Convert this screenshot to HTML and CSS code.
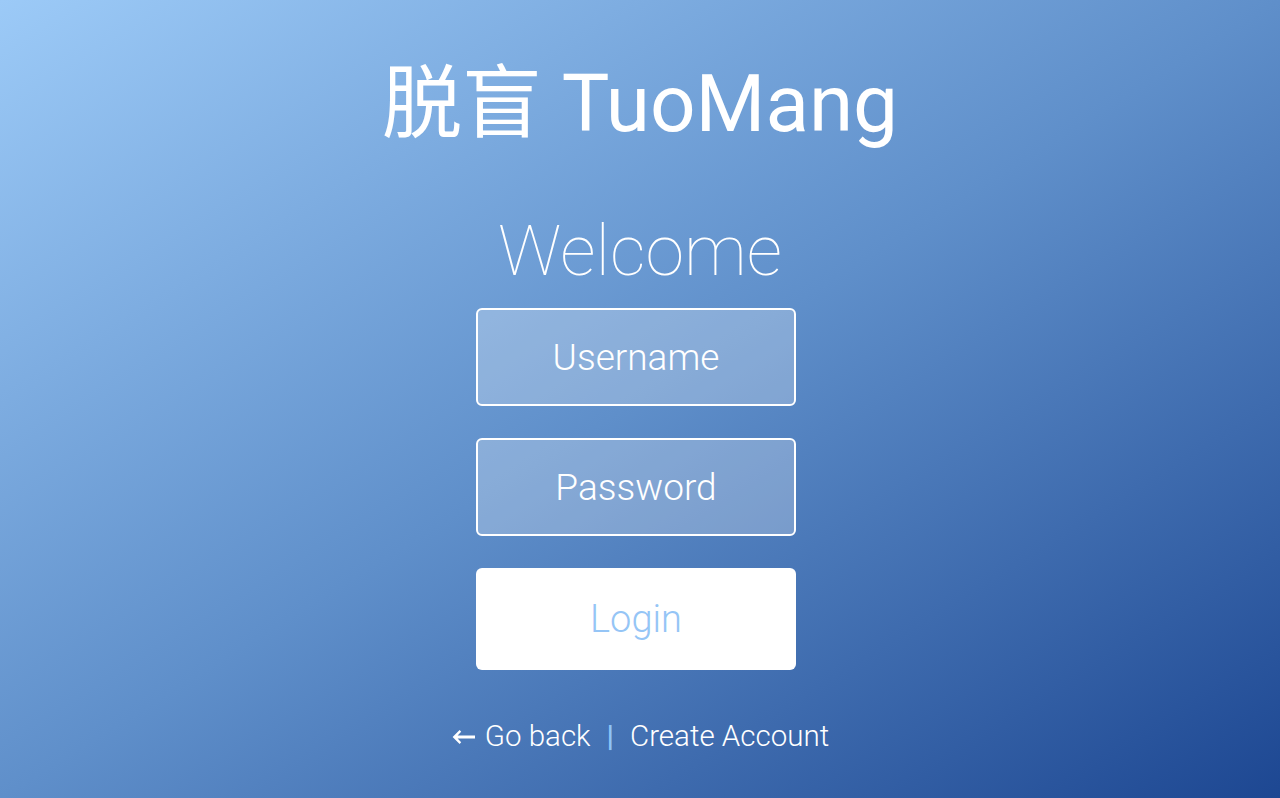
FILE: index.html
```html
<!DOCTYPE html>
<html lang="en">
<head>
<meta charset="utf-8">
<title>TuoMang</title>
<link rel="stylesheet" href="styles.css">
</head>
<body>
<main class="page">
  <h1 class="brand">脱盲 TuoMang</h1>
  <h2 class="welcome">Welcome</h2>
  <form class="form">
    <input class="field" type="text" placeholder="Username">
    <input class="field" type="password" placeholder="Password">
    <button class="login" type="button">Login</button>
  </form>
  <nav class="links">
    <a class="link" href="#"><svg class="arrow" width="24" height="14" viewBox="0 0 24 14" aria-hidden="true"><path d="M24 5.4H6.6L10.2 1.8 8.6 0 1.6 7l7 7 1.6-1.8-3.6-3.6H24z" fill="#fff"/></svg>Go back</a>
    <span class="sep">|</span>
    <a class="link" href="#">Create Account</a>
  </nav>
</main>
</body>
</html>
```
FILE: styles.css
```css
html, body {
  margin: 0;
  padding: 0;
  height: 100%;
}
body {
  background: linear-gradient(to bottom right, #9ccaf7 0%, #5f8fca 50%, #1d4792 100%);
  font-family: Roboto, "Noto Sans CJK SC", sans-serif;
  color: #fff;
  overflow: hidden;
}
.page {
  height: 798px;
  display: flex;
  flex-direction: column;
  align-items: center;
}
.brand {
  margin: 0;
  padding-top: 57px;
  font-size: 80px;
  font-weight: 400;
  line-height: 94px;
  font-family: Roboto, "Noto Sans CJK SC", sans-serif;
}
.welcome {
  margin: 0;
  margin-top: 58px;
  font-size: 70px;
  font-weight: 100;
  line-height: 84px;
}
.form {
  display: flex;
  flex-direction: column;
  gap: 32px;
  margin-top: 15px;
  margin-right: 8px;
}
.field {
  box-sizing: border-box;
  width: 320px;
  height: 98px;
  border: 2px solid #fff;
  border-radius: 6px;
  background: rgba(255, 255, 255, 0.25);
  color: #fff;
  text-align: center;
  font-family: Roboto, sans-serif;
  font-size: 37px;
  font-weight: 300;
  outline: none;
  padding: 0;
}
.field::placeholder {
  color: #fff;
  opacity: 1;
}
.login {
  box-sizing: border-box;
  width: 320px;
  height: 102px;
  border: none;
  border-radius: 6px;
  background: #fff;
  color: #95c5f6;
  font-family: Roboto, sans-serif;
  font-size: 38px;
  font-weight: 300;
  cursor: pointer;
}
.links {
  margin-top: 49px;
  display: flex;
  align-items: baseline;
  gap: 16px;
  font-size: 29.5px;
  font-weight: 300;
}
.link {
  color: #fff;
  text-decoration: none;
}
.arrow {
  margin-right: 10px;
  vertical-align: 2px;
}
.sep {
  color: #8fc4f6;
  font-weight: 700;
}
```
